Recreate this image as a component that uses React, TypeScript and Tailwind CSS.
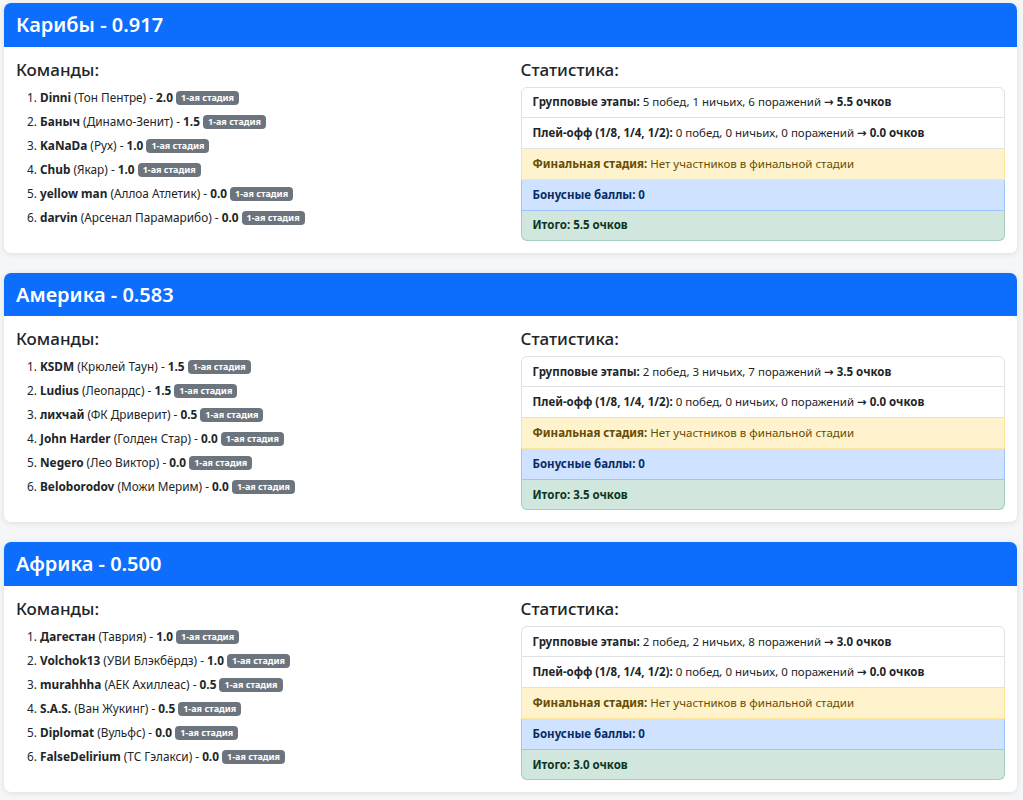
import React from "react";

type Player = { nick: string; club: string; pts: string };
type Region = {
  name: string;
  score: string;
  players: Player[];
  group: string;
  groupPts: string;
  total: string;
};

const regions: Region[] = [
  {
    name: "Карибы",
    score: "0.917",
    players: [
      { nick: "Dinni", club: "Тон Пентре", pts: "2.0" },
      { nick: "Баныч", club: "Динамо-Зенит", pts: "1.5" },
      { nick: "KaNaDa", club: "Рух", pts: "1.0" },
      { nick: "Chub", club: "Якар", pts: "1.0" },
      { nick: "yellow man", club: "Аллоа Атлетик", pts: "0.0" },
      { nick: "darvin", club: "Арсенал Парамарибо", pts: "0.0" },
    ],
    group: "5 побед, 1 ничьих, 6 поражений",
    groupPts: "5.5",
    total: "5.5",
  },
  {
    name: "Америка",
    score: "0.583",
    players: [
      { nick: "KSDM", club: "Крюлей Таун", pts: "1.5" },
      { nick: "Ludius", club: "Леопардс", pts: "1.5" },
      { nick: "лихчай", club: "ФК Дриверит", pts: "0.5" },
      { nick: "John Harder", club: "Голден Стар", pts: "0.0" },
      { nick: "Negero", club: "Лео Виктор", pts: "0.0" },
      { nick: "Beloborodov", club: "Можи Мерим", pts: "0.0" },
    ],
    group: "2 побед, 3 ничьих, 7 поражений",
    groupPts: "3.5",
    total: "3.5",
  },
  {
    name: "Африка",
    score: "0.500",
    players: [
      { nick: "Дагестан", club: "Таврия", pts: "1.0" },
      { nick: "Volchok13", club: "УВИ Блэкбёрдз", pts: "1.0" },
      { nick: "murahhha", club: "АЕК Ахиллеас", pts: "0.5" },
      { nick: "S.A.S.", club: "Ван Жукинг", pts: "0.5" },
      { nick: "Diplomat", club: "Вульфс", pts: "0.0" },
      { nick: "FalseDelirium", club: "ТС Гэлакси", pts: "0.0" },
    ],
    group: "2 побед, 2 ничьих, 8 поражений",
    groupPts: "3.0",
    total: "3.0",
  },
];

// Arrow glyph drawn from DejaVu, which has a longer, heavier shaft
function Arrow() {
  return <span className="font-bold mx-[3px]" style={{ fontFamily: '"DejaVu Sans", sans-serif' }}>→</span>;
}

function RegionCard({ r }: { r: Region }) {
  return (
    <div className="bg-white rounded-[7px] shadow-[0_1px_6px_rgba(0,0,0,0.10)]">
      <div className="bg-[#0d6efd] text-white rounded-t-[7px] px-[12px] py-[8px] text-[20px] leading-[27.7px] font-semibold">
        {r.name} - {r.score}
      </div>
      <div className="p-[12px] grid grid-cols-2 gap-x-[20px] items-start">
        <div>
          <h5 className="text-[17px] leading-[21px] font-medium mb-[7px] text-[#212529]">Команды:</h5>
          <ol className="list-decimal pl-[24px] text-[11.8px] text-[#212529]">
            {r.players.map((p) => (
              <li key={p.nick} className="leading-[20px] mb-[4px]">
                <b className="font-bold">{p.nick}</b> ({p.club}) - <b className="font-bold">{p.pts}</b>{" "}
                <span className="inline-block align-[1px] bg-[#6c757d] text-white text-[9px] font-bold leading-[10px] px-[5px] py-[2px] rounded-[4px]">
                  1-ая стадия
                </span>
              </li>
            ))}
          </ol>
        </div>
        <div>
          <h5 className="text-[17px] leading-[21px] font-medium mb-[7px] text-[#212529]">Статистика:</h5>
          <div className="text-[11.5px] leading-[18px]">
            <div className="h-[31px] flex items-center border border-[#dee2e6] rounded-t-[6px] px-[11px] text-[#212529]">
              <span>
                <b>Групповые этапы:</b> {r.group}<Arrow /><b>{r.groupPts} очков</b>
              </span>
            </div>
            <div className="h-[31px] flex items-center border-x border-b border-[#dee2e6] px-[11px] text-[#212529]">
              <span>
                <b>Плей-офф (1/8, 1/4, 1/2):</b> 0 побед, 0 ничьих, 0 поражений<Arrow /><b>0.0 очков</b>
              </span>
            </div>
            <div className="h-[31px] flex items-center border-x border-b border-[#ffe69c] bg-[#fff3cd] px-[11px] text-[#664d03]">
              <span>
                <b>Финальная стадия:</b> Нет участников в финальной стадии
              </span>
            </div>
            <div className="h-[31px] flex items-center border-x border-b border-[#9ec5fe] bg-[#cfe2ff] px-[11px] text-[#052c65]">
              <b>Бонусные баллы: 0</b>
            </div>
            <div className="h-[30px] flex items-center border-x border-b border-[#a3cfbb] bg-[#d1e7dd] rounded-b-[6px] px-[11px] text-[#0a3622]">
              <b>Итого: {r.total} очков</b>
            </div>
          </div>
        </div>
      </div>
    </div>
  );
}

export default function App() {
  return (
    <div
      className="min-h-[800px] bg-[#f5f6f8] pl-[4px] pr-[6px] pt-[3px] pb-[20px]"
      style={{ fontFamily: '"Noto Sans", "Open Sans", sans-serif' }}
    >
      <div className="flex flex-col gap-[20px]">
        {regions.map((r) => (
          <RegionCard key={r.name} r={r} />
        ))}
      </div>
    </div>
  );
}
